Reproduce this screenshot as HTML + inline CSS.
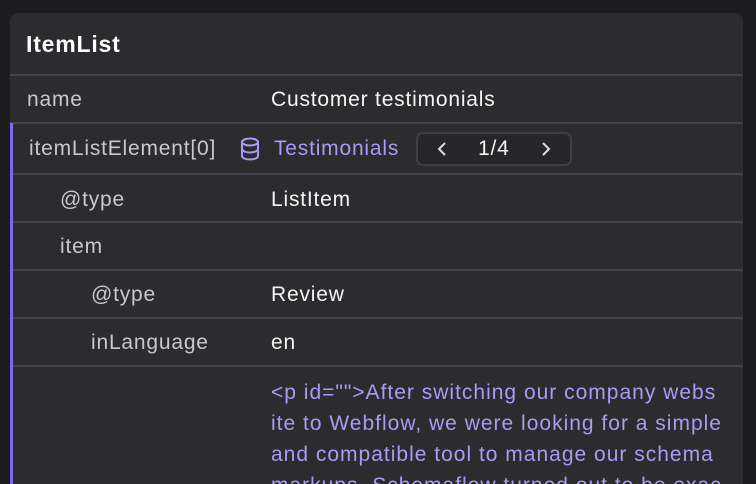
<!DOCTYPE html>
<html><head><style>
*{margin:0;padding:0;box-sizing:border-box}
html,body{width:756px;height:484px;overflow:hidden}
body{background:#1c1b1e;font-family:"Liberation Sans",sans-serif;position:relative}
.panel{position:absolute;left:10px;top:13px;width:733px;height:471px;background:#2c2b2e;border-radius:8px 8px 0 0;overflow:hidden}
.line{position:absolute;left:0;right:0;height:2px;background:#454448}
.t{position:absolute;font-size:21px;line-height:24px;white-space:nowrap;letter-spacing:0.8px}
.k{color:#c9c8cc}.v{color:#f4f4f5}.p{color:#a99bf6}
.bar{position:absolute;left:0;top:110px;width:3px;height:400px;background:#7d68f0}
</style></head><body>
<div class="panel">
<div class="t" style="left:16px;top:19px;font-weight:bold;color:#fff;font-size:23px;letter-spacing:0.8px">ItemList</div>
<div class="line" style="top:61px"></div>
<div class="t k" style="left:17px;top:75px">name</div>
<div class="t v" style="left:261px;top:75px">Customer testimonials</div>
<div class="line" style="top:109px"></div>
<div class="t k" style="left:19px;top:124px">itemListElement[0]</div>
<svg style="position:absolute;left:230px;top:124px" width="20" height="24" viewBox="0 0 20 24" fill="none" stroke="#a99bf6" stroke-width="2"><ellipse cx="10" cy="5" rx="8" ry="3.5"/><path d="M2 5v14c0 2 3.6 3.5 8 3.5s8-1.5 8-3.5V5M2 12c0 2 3.6 3.5 8 3.5s8-1.5 8-3.5"/></svg>
<div class="t p" style="left:264px;top:124px">Testimonials</div>
<div style="position:absolute;left:406px;top:119px;width:156px;height:34px;border:2px solid #404043;border-radius:7px;background:#262528"></div>
<svg style="position:absolute;left:426px;top:128px" width="12" height="16" viewBox="0 0 12 16" fill="none" stroke="#ddd" stroke-width="2"><path d="M9 2L3 8l6 6"/></svg>
<div class="t v" style="left:468px;top:124px">1/4</div>
<svg style="position:absolute;left:530px;top:128px" width="12" height="16" viewBox="0 0 12 16" fill="none" stroke="#ddd" stroke-width="2"><path d="M3 2l6 6-6 6"/></svg>
<div class="line" style="top:160px"></div>
<div class="t k" style="left:50px;top:175px">@type</div>
<div class="t v" style="left:261px;top:175px">ListItem</div>
<div class="line" style="top:208px"></div>
<div class="t k" style="left:50px;top:222px">item</div>
<div class="line" style="top:256px"></div>
<div class="t k" style="left:81px;top:270px">@type</div>
<div class="t v" style="left:261px;top:270px">Review</div>
<div class="line" style="top:304px"></div>
<div class="t k" style="left:81px;top:318px">inLanguage</div>
<div class="t v" style="left:261px;top:318px">en</div>
<div class="line" style="top:352px"></div>
<div class="t p" style="left:261px;top:364px;line-height:31px;letter-spacing:1px">&lt;p id=""&gt;After switching our company webs<br>ite to Webflow, we were looking for a simple<br>and compatible tool to manage our schema<br>markups. Schemaflow turned out to be exac</div>
<div class="bar"></div>
</div>
</body></html>
